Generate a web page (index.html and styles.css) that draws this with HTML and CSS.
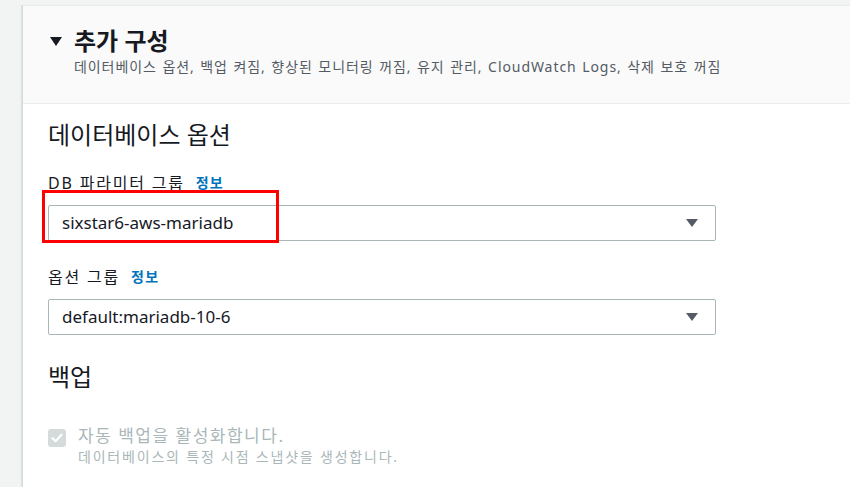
FILE: index.html
```html
<!DOCTYPE html>
<html lang="ko">
<head>
<meta charset="utf-8">
<link rel="stylesheet" href="styles.css">
</head>
<body>
<div class="page">
  <section class="card">
    <header class="card-header">
      <div class="title-row">
        <svg class="caret" width="12" height="10" viewBox="0 0 12 10"><path d="M0 0 H12 L6 9 Z" fill="#16191f"/></svg>
        <h2 class="title">추가 구성</h2>
      </div>
      <p class="subtitle">데이터베이스 옵션, 백업 켜짐, 향상된 모니터링 꺼짐, 유지 관리, CloudWatch Logs, 삭제 보호 꺼짐</p>
    </header>
    <div class="card-body">
      <h3 class="section-title">데이터베이스 옵션</h3>

      <div class="field">
        <div class="label">DB 파라미터 그룹 <a class="info">정보</a></div>
        <div class="select-wrap">
          <div class="select">
            <span class="select-value">sixstar6-aws-mariadb</span>
            <svg class="arrow" width="12" height="8" viewBox="0 0 12 8"><path d="M0 0 H12 L6 8 Z" fill="#545b64"/></svg>
          </div>
          <div class="highlight"></div>
        </div>
      </div>

      <div class="field">
        <div class="label">옵션 그룹 <a class="info">정보</a></div>
        <div class="select-wrap">
          <div class="select">
            <span class="select-value">default:mariadb-10-6</span>
            <svg class="arrow" width="12" height="8" viewBox="0 0 12 8"><path d="M0 0 H12 L6 8 Z" fill="#545b64"/></svg>
          </div>
        </div>
      </div>

      <h3 class="section-title backup">백업</h3>

      <div class="check-row">
        <span class="checkbox">
          <svg width="18" height="18" viewBox="0 0 18 18"><path d="M4.5 9.2 L7.6 12.2 L13.5 5.8" fill="none" stroke="#fff" stroke-width="2.2" stroke-linecap="round" stroke-linejoin="round"/></svg>
        </span>
        <div class="check-text">
          <div class="check-label">자동 백업을 활성화합니다.</div>
          <div class="check-desc">데이터베이스의 특정 시점 스냅샷을 생성합니다.</div>
        </div>
      </div>
    </div>
  </section>
</div>
</body>
</html>
```

FILE: styles.css
```css
html, body {
  margin: 0;
  padding: 0;
  overflow: hidden;
  background: #f2f3f3;
}
body {
  font-family: "Noto Sans", "Noto Sans CJK KR", sans-serif;
  color: #16191f;
}
.page {
  padding: 5px 0 0 22px;
}
.card {
  width: 840px;
  background: #fff;
  border-top: 1px solid #eaeded;
  border-left: 1px solid #d5dbdb;
  box-shadow: -1px 0 1px rgba(0, 28, 36, 0.08);
  min-height: 500px;
}
.card-header {
  background: #fafafa;
  border-bottom: 1px solid #eaeded;
  padding: 20px 0 0 27px;
  height: 77px;
}
.title-row {
  display: flex;
  align-items: center;
  gap: 12px;
  height: 30px;
}
.caret {
  display: block;
  margin-top: 1px;
}
.title {
  margin: 0;
  font-size: 24px;
  font-weight: 700;
  line-height: 30px;
}
.subtitle {
  margin: 1px 0 0 24px;
  font-size: 14px;
  line-height: 20px;
  word-spacing: 1px;
  letter-spacing: 0.93px;
  color: #545b64;
}
.card-body {
  padding: 16px 0 0 25px;
}
.section-title {
  margin: 0;
  font-size: 24px;
  font-weight: 400;
  line-height: 30px;
}
.field {
  margin-top: 22px;
}
.field + .field {
  margin-top: 25px;
}
.label {
  font-size: 16px;
  line-height: 22px;
  letter-spacing: 1.8px;
  display: flex;
  align-items: center;
  gap: 11px;
}
.info {
  color: #0073bb;
  font-size: 14px;
  font-weight: 700;
  letter-spacing: 1.2px;
}
.select-wrap {
  position: relative;
  margin-top: 11px;
  width: 668px;
}
.select {
  box-sizing: border-box;
  height: 36px;
  border: 1px solid #aab7b8;
  border-radius: 2px;
  background: #fff;
  display: flex;
  align-items: center;
  justify-content: space-between;
  padding: 0 17px 0 13px;
}
.select-value {
  font-size: 17px;
  line-height: 22px;
}
.arrow {
  display: block;
}
.highlight {
  position: absolute;
  left: -6px;
  top: -15px;
  width: 237px;
  height: 53px;
  box-sizing: border-box;
  border: 3px solid #ff0000;
}
.section-title.backup {
  margin-top: 27px;
}
.check-row {
  display: flex;
  align-items: flex-start;
  gap: 12px;
  margin-top: 33px;
}
.checkbox {
  width: 18px;
  height: 18px;
  border-radius: 3px;
  background: #d5dbdb;
  margin-top: 4px;
  display: block;
}
.checkbox svg {
  display: block;
}
.check-label {
  font-size: 17px;
  line-height: 22px;
  letter-spacing: 1.5px;
  color: #aab7b8;
}
.check-desc {
  font-size: 14px;
  line-height: 20px;
  letter-spacing: 1.8px;
  color: #aab7b8;
}
```
